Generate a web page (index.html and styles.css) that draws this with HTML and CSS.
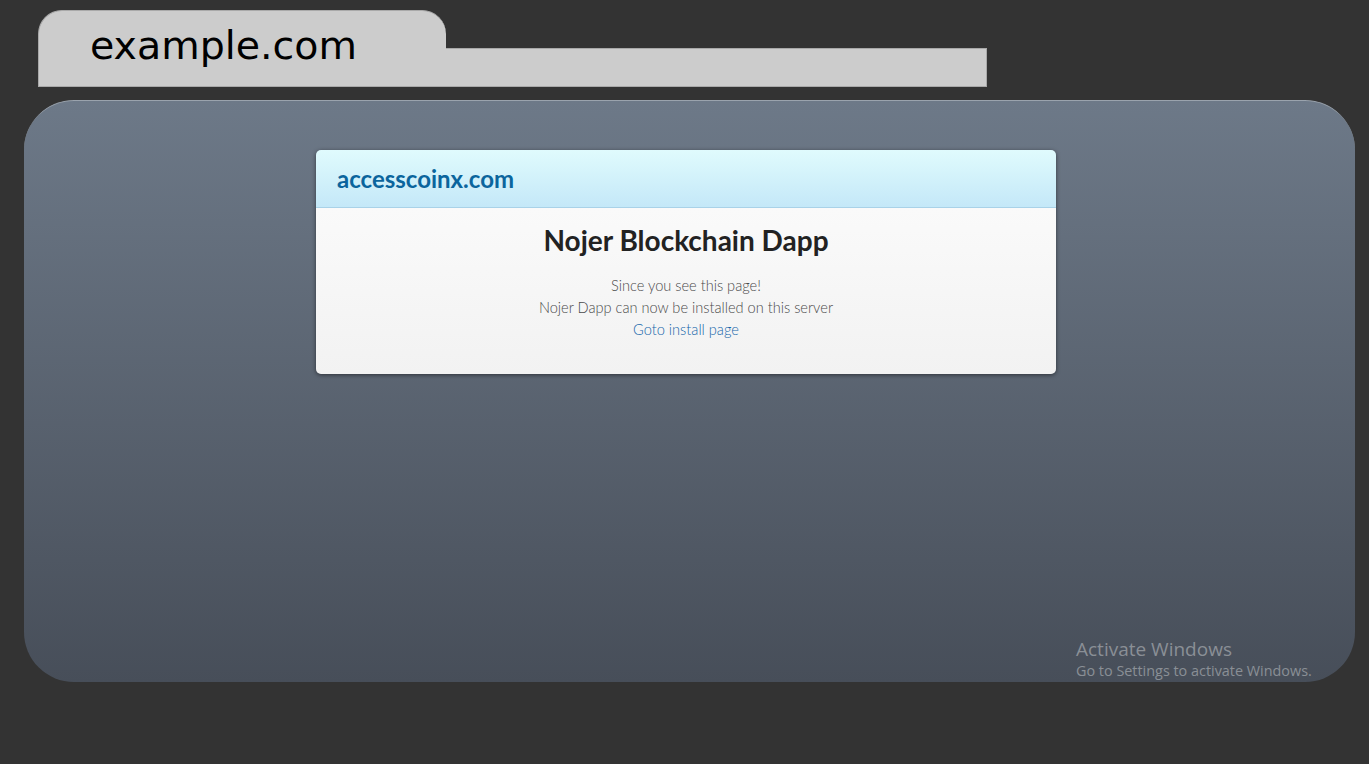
FILE: index.html
```html
<!DOCTYPE html>
<html>
<head>
<meta charset="utf-8">
<link rel="stylesheet" href="styles.css">
</head>
<body>
<div class="tabrow">
  <div class="tab">example.com</div>
  <div class="bar"></div>
</div>
<div class="panel">
  <div class="card">
    <div class="card-head">accesscoinx.com</div>
    <div class="card-body">
      <h1 class="title">Nojer Blockchain Dapp</h1>
      <p class="line">Since you see this page!</p>
      <p class="line">Nojer Dapp can now be installed on this server</p>
      <p class="line"><a class="link" href="#">Goto install page</a></p>
    </div>
  </div>
  <div class="activate">
    <div class="act-title">Activate Windows</div>
    <div class="act-sub">Go to Settings to activate Windows.</div>
  </div>
</div>
</body>
</html>
```

FILE: styles.css
```css
html, body {
  margin: 0;
  padding: 0;
  background: #333333;
  height: 100%;
}
body {
  padding-top: 10px;
  box-sizing: border-box;
}
.tabrow {
  display: flex;
  align-items: flex-end;
  margin-left: 38px;
  height: 77px;
}
.tab {
  width: 408px;
  height: 77px;
  box-sizing: border-box;
  background: #cccccc;
  border: 1px solid #a9a9a9;
  border-right: none;
  border-radius: 24px 24px 0 0;
  font-family: "DejaVu Sans", Verdana, sans-serif;
  font-size: 39.5px;
  color: #000;
  padding-left: 51px;
  padding-top: 9px;
  line-height: 50px;
  position: relative;
}
.bar {
  width: 541px;
  height: 39px;
  box-sizing: border-box;
  background: #cccccc;
  border: 1px solid #a9a9a9;
  border-left: none;
}
.panel {
  position: relative;
  margin: 13px 0 0 24px;
  width: 1331px;
  height: 582px;
  box-sizing: border-box;
  border-radius: 50px;
  border-top: 1px solid #9aa3ad;
  background: linear-gradient(#6d7988, #474e59);
  padding-top: 49px;
}
.card {
  width: 740px;
  margin-left: 292px;
  border-radius: 5px;
  overflow: hidden;
  box-shadow: 0 1px 4px rgba(0,0,0,0.5);
  font-family: Lato, "Open Sans", sans-serif;
}
.card-head {
  height: 58px;
  box-sizing: border-box;
  background: linear-gradient(#e0fbfd, #c4e8f8);
  border-bottom: 1px solid #a9d2e8;
  color: #0b659d;
  font-weight: 700;
  font-size: 24px;
  line-height: 57px;
  padding-left: 21px;
}
.card-body {
  background: linear-gradient(#fafafa, #f2f2f2);
  text-align: center;
  padding: 14px 0 33px;
}
.title {
  margin: 0 0 17px;
  font-size: 28px;
  font-weight: 700;
  color: #222;
  line-height: 36px;
}
.line {
  margin: 0;
  font-size: 14.6px;
  font-weight: 300;
  color: #4a4a4a;
  line-height: 22px;
}
.link {
  color: #1566aa;
  text-decoration: none;
}
.activate {
  position: absolute;
  left: 1052px;
  top: 536px;
  font-family: "Open Sans", "Noto Sans", sans-serif;
  color: #8a8f96;
}
.act-title {
  font-size: 19px;
  line-height: 24px;
}
.act-sub {
  font-size: 14.4px;
  line-height: 20px;
}
```
